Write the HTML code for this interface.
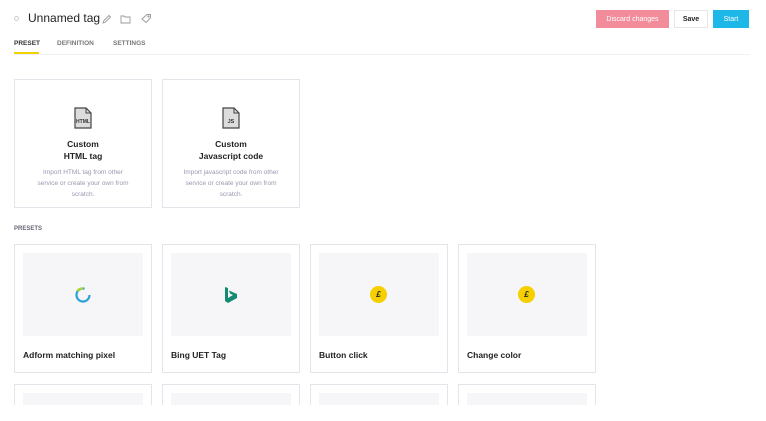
<!DOCTYPE html>
<html><head><style>
*{margin:0;padding:0;box-sizing:border-box}
html,body{width:766px;height:421px;overflow:hidden}
body{background:#fff;font-family:"Liberation Sans",sans-serif;position:relative;color:#222}
.a{position:absolute}
.card{position:absolute;border:1px solid #e4e4ea;background:#fff;width:138px;overflow:hidden}
.gr{position:absolute;left:8px;top:8px;width:120px;height:83px;background:#f6f6f9}
.lbl{position:absolute;left:8px;top:105px;font-size:8.5px;font-weight:bold;color:#222}
.ttl{position:absolute;left:0;width:136px;top:58px;text-align:center;font-size:8.5px;font-weight:bold;line-height:12px;color:#222}
.dsc{position:absolute;left:0;width:136px;top:87px;text-align:center;font-size:6.5px;line-height:11px;color:#9a98b0}
.coin{position:absolute;left:59px;top:41px;width:17px;height:17px;border-radius:50%;background:#f5cf00;font-size:8px;font-weight:bold;text-align:center;line-height:17px;font-style:italic}
.btn{position:absolute;top:10px;height:18px;font-size:7px;display:flex;align-items:center;justify-content:center}
</style></head><body>
<div class="a" style="left:14px;top:16px;width:5px;height:5px;border:1px solid #ccc;border-radius:50%"></div>
<div class="a" style="left:28px;top:11px;font-size:12px;color:#222">Unnamed tag</div>
<svg class="a" style="left:101px;top:13px" width="60" height="12" viewBox="0 0 60 12" fill="none" stroke="#999" stroke-width="0.9">
<path d="M2 10 L3 7.5 L8 2.5 L9.5 4 L4.5 9 Z"/>
<path d="M20 3 h3 l1 1 h5 v6 h-9 z"/>
<path d="M41 6 L46 1.5 h3.5 v3.5 L45 9.5 Z"/><circle cx="47.5" cy="3.5" r="0.7"/>
</svg>
<div class="a" style="left:14px;top:40px;font-size:6.5px;font-weight:bold;color:#333">PRESET</div>
<div class="a" style="left:57px;top:40px;font-size:6.5px;font-weight:bold;color:#777">DEFINITION</div>
<div class="a" style="left:113px;top:40px;font-size:6.5px;font-weight:bold;color:#777">SETTINGS</div>
<div class="a" style="left:14px;top:52px;width:25px;height:2px;background:#f2d100"></div>
<div class="a" style="left:14px;top:54px;width:736px;height:1px;background:#f2f2f4"></div>
<div class="btn" style="left:596px;width:73px;background:#f28c9a;color:#fff">Discard changes</div>
<div class="btn" style="left:674px;width:34px;background:#fff;border:1px solid #e6e6ea;font-weight:bold">Save</div>
<div class="btn" style="left:713px;width:36px;background:#1db8e8;color:#fff">Start</div>

<div class="card" style="left:14px;top:79px;height:129px">
<svg class="a" style="left:58px;top:27px" width="20" height="22" viewBox="0 0 20 22"><path d="M2 1 h11 l5 5 v15 h-16 z" fill="#ddd" stroke="#444" stroke-width="1.2"/><path d="M13 1 v5 h5" fill="none" stroke="#444"/><text x="10" y="16" font-size="5" font-weight="bold" text-anchor="middle" fill="#333" font-family="Liberation Sans">HTML</text></svg>
<div class="ttl">Custom<br>HTML tag</div>
<div class="dsc">Import HTML tag from other<br>service or create your own from<br>scratch.</div></div>
<div class="card" style="left:162px;top:79px;height:129px">
<svg class="a" style="left:58px;top:27px" width="20" height="22" viewBox="0 0 20 22"><path d="M2 1 h11 l5 5 v15 h-16 z" fill="#ddd" stroke="#444" stroke-width="1.2"/><path d="M13 1 v5 h5" fill="none" stroke="#444"/><text x="10" y="16" font-size="5.5" font-weight="bold" text-anchor="middle" fill="#333" font-family="Liberation Sans">JS</text></svg>
<div class="ttl">Custom<br>Javascript code</div>
<div class="dsc">Import javascript code from other<br>service or create your own from<br>scratch.</div></div>

<div class="a" style="left:14px;top:226px;font-size:6px;font-weight:bold;color:#667">PRESETS</div>

<div class="card" style="left:14px;top:244px;height:129px"><div class="gr"></div>
<svg class="a" style="left:59px;top:41px" width="18" height="18" viewBox="0 0 18 18"><circle cx="9" cy="9" r="6.5" fill="none" stroke="#2a9fd8" stroke-width="2.2" stroke-dasharray="32 9"/><path d="M3 5 A7 7 0 0 1 9 2.5" stroke="#b6d52a" stroke-width="2.2" fill="none"/></svg>
<div class="lbl">Adform matching pixel</div></div>
<div class="card" style="left:162px;top:244px;height:129px"><div class="gr"></div>
<svg class="a" style="left:61px;top:41px" width="14" height="17" viewBox="0 0 14 17"><path d="M1 1 l3 1 v10 l5-3 -3-1.5 -1-3 8 3.5 v4 l-9 5 -3-2 z" fill="#138a72"/></svg>
<div class="lbl">Bing UET Tag</div></div>
<div class="card" style="left:310px;top:244px;height:129px"><div class="gr"></div><div class="coin">£</div>
<div class="lbl">Button click</div></div>
<div class="card" style="left:458px;top:244px;height:129px"><div class="gr"></div><div class="coin">£</div>
<div class="lbl">Change color</div></div>

<div class="card" style="left:14px;top:384px;height:21px;border-bottom:none"><div class="gr"></div></div>
<div class="card" style="left:162px;top:384px;height:21px;border-bottom:none"><div class="gr"></div></div>
<div class="card" style="left:310px;top:384px;height:21px;border-bottom:none"><div class="gr"></div></div>
<div class="card" style="left:458px;top:384px;height:21px;border-bottom:none"><div class="gr"></div></div>
</body></html>
